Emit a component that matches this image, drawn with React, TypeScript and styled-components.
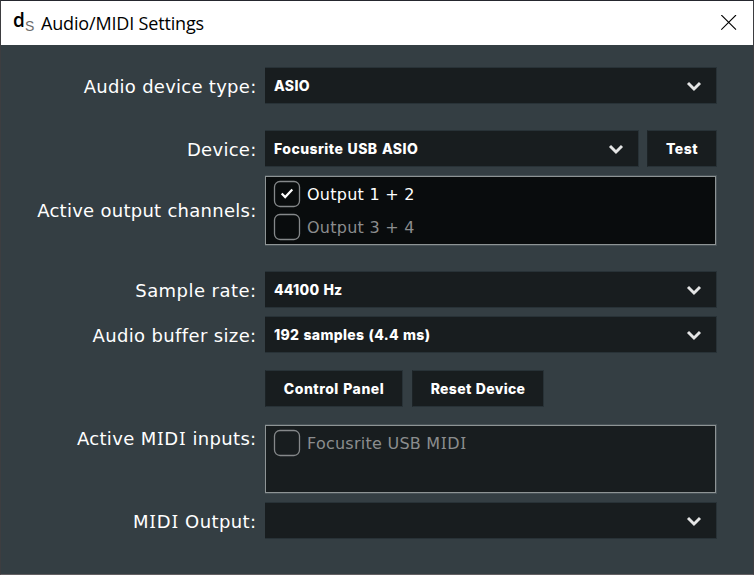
import React from "react";
import styled, { createGlobalStyle } from "styled-components";

const Global = createGlobalStyle`
  * { box-sizing: border-box; }
  body { margin: 0; background: #343e43; }
  button { font: inherit; margin: 0; }
`;

const Window = styled.div`
  width: 754px;
  height: 575px;
  border: 1px solid #3d3d40;
  border-top-color: #25272e;
  border-bottom-color: #625f62;
  background: #343e43;
  color: #fff;
  font-family: "DejaVu Sans", sans-serif;
  overflow: hidden;
`;

const TitleBar = styled.header`
  height: 44px;
  display: flex;
  align-items: center;
  padding: 0 16px 0 12px;
  background: #fff;
  color: #000;
`;

const Logo = styled.div`
  display: flex;
  width: 28px;
  height: 44px;
  font-family: "Open Sans", sans-serif;
`;

const LogoD = styled.span`
  width: 12px;
  padding-top: 7px;
  font-size: 19px;
  font-weight: 600;
  line-height: 24px;
`;

const LogoS = styled.span`
  padding-top: 17px;
  font-family: "Liberation Sans", sans-serif;
  font-size: 14px;
  line-height: 16px;
  color: #6c6c6c;
`;

const Title = styled.h1`
  flex: 1;
  margin: 0;
  font: 400 18px/24px "Open Sans", sans-serif;
  letter-spacing: -0.17px;
`;

const CloseButton = styled.button`
  display: flex;
  padding: 0;
  border: 0;
  background: none;
`;

const Form = styled.main`
  display: flex;
  flex-direction: column;
  padding: 22px 36px 0 0;
`;

const Row = styled.div<{ $gap?: number; $height?: number }>`
  display: grid;
  grid-template-columns: 264px 452px;
  height: ${(p) => p.$height ?? 37}px;
  margin-bottom: ${(p) => p.$gap ?? 0}px;
`;

const Label = styled.label<{ $spacing?: number; $top?: boolean; $pad?: number }>`
  align-self: ${(p) => (p.$top ? "start" : "center")};
  padding: ${(p) => p.$pad ?? 2}px 8.5px 0 0;
  text-align: right;
  font-size: 18px;
  line-height: 22px;
  white-space: nowrap;
  letter-spacing: ${(p) => p.$spacing ?? 0.27}px;
`;

const SerifCapital = styled.span`
  padding: 0 0.035em;
  font-family: "Noto Sans", sans-serif;
  font-size: 1.02em;
  line-height: 1;
`;

const Controls = styled.div<{ $gap?: number }>`
  display: flex;
  gap: ${(p) => p.$gap ?? 8}px;
`;

const SelectBox = styled.button<{ $spacing: number }>`
  flex: 1;
  display: flex;
  align-items: center;
  justify-content: space-between;
  padding: 0 14px 0 9px;
  border: 1px solid #283237;
  border-left: 0;
  background: #181d1f;
  color: #fff;
  font: 800 14px/20px Inter, sans-serif;
  letter-spacing: ${(p) => p.$spacing}px;
  word-spacing: 0.8px;
`;

const PushButton = styled.button<{ $width: number; $spacing?: number }>`
  width: ${(p) => p.$width}px;
  padding: 0;
  border: 1px solid #283237;
  border-left-color: #1c2326;
  background: #181d1f;
  color: #fff;
  font: 800 14px/20px Inter, sans-serif;
  letter-spacing: ${(p) => p.$spacing ?? 0}px;
  word-spacing: 0.8px;
`;

const ListBox = styled.div<{ $dark?: boolean }>`
  flex: 1;
  margin: 1px 1px 1px 0;
  border: 1px solid #8e9495;
  box-shadow: 0 0 0 1px #485257;
  clip-path: inset(-1px -1px -1px 0);
  padding: 1px 0 0 7px;
  background: ${(p) => (p.$dark ? "#090c0d" : "#181d1f")};
`;

const Option = styled.div<{ $on?: boolean; $spacing?: number }>`
  display: flex;
  align-items: center;
  gap: 6px;
  height: 33px;
  color: ${(p) => (p.$on ? "#fff" : "#8b8d8e")};
  font-size: 16px;
  letter-spacing: ${(p) => p.$spacing ?? 0.25}px;
`;

const CheckIcon = styled.svg`
  margin-top: -2px;
`;

const Check = ({ on }: { on?: boolean }) => (
  <CheckIcon width="28" height="28" viewBox="0 0 28 28" fill="none">
    <rect x="1.5" y="1.5" width="25" height="25" rx="5.5" stroke="#85888a" strokeWidth="1.3" />
    {on && <path d="M8.7 13.4 12.2 17.1 19.3 9.6" stroke="#fff" strokeWidth="2.2" />}
  </CheckIcon>
);

const Chevron = () => (
  <svg width="16" height="12" viewBox="0 0 16 12" fill="none">
    <path d="M2 3 8 9 14 3" stroke="#e4e5e5" strokeWidth="2.9" />
  </svg>
);

const Midi = () => (
  <>
    M<SerifCapital>I</SerifCapital>D<SerifCapital>I</SerifCapital>
  </>
);

const Select = ({ text, spacing = 0 }: { text?: string; spacing?: number }) => (
  <SelectBox $spacing={spacing}>
    <span>{text}</span>
    <Chevron />
  </SelectBox>
);

export default function App() {
  return (
    <>
      <Global />
      <Window>
        <TitleBar>
          <Logo>
            <LogoD>d</LogoD>
            <LogoS>S</LogoS>
          </Logo>
          <Title>Audio/MIDI Settings</Title>
          <CloseButton aria-label="Close">
            <svg width="16" height="16" viewBox="0 0 16 16">
              <path d="M.3 0 15 14.7M15 0 .3 14.7" stroke="#000" strokeWidth="1.1" />
            </svg>
          </CloseButton>
        </TitleBar>
        <Form>
          <Row $gap={26}>
            <Label>Audio device type:</Label>
            <Controls><Select text="ASIO" spacing={0.35} /></Controls>
          </Row>
          <Row $gap={8}>
            <Label>Device:</Label>
            <Controls>
              <Select text="Focusrite USB ASIO" spacing={0.44} />
              <PushButton $width={70} $spacing={0.5}>Test</PushButton>
            </Controls>
          </Row>
          <Row $height={70} $gap={26}>
            <Label $pad={1}>Active output channels:</Label>
            <Controls>
              <ListBox $dark>
                <Option $on><Check on />Output 1 + 2</Option>
                <Option><Check />Output 3 + 4</Option>
              </ListBox>
            </Controls>
          </Row>
          <Row $gap={8}>
            <Label $spacing={0.45}>Sample rate:</Label>
            <Controls><Select text="44100 Hz" spacing={0.22} /></Controls>
          </Row>
          <Row $gap={17}>
            <Label $spacing={0.36}>Audio buffer size:</Label>
            <Controls><Select text="192 samples (4.4 ms)" spacing={0.32} /></Controls>
          </Row>
          <Row $gap={17}>
            <span />
            <Controls $gap={9}>
              <PushButton $width={138} $spacing={0.52}>Control Panel</PushButton>
              <PushButton $width={132} $spacing={0.33}>Reset Device</PushButton>
            </Controls>
          </Row>
          <Row $height={70} $gap={8}>
            <Label $top $pad={4} $spacing={0.33}>Active <Midi /> inputs:</Label>
            <Controls>
              <ListBox>
                <Option><Check /><span>Focusrite USB <Midi /></span></Option>
              </ListBox>
            </Controls>
          </Row>
          <Row>
            <Label $spacing={0.4}><Midi /> Output:</Label>
            <Controls><Select /></Controls>
          </Row>
        </Form>
      </Window>
    </>
  );
}
